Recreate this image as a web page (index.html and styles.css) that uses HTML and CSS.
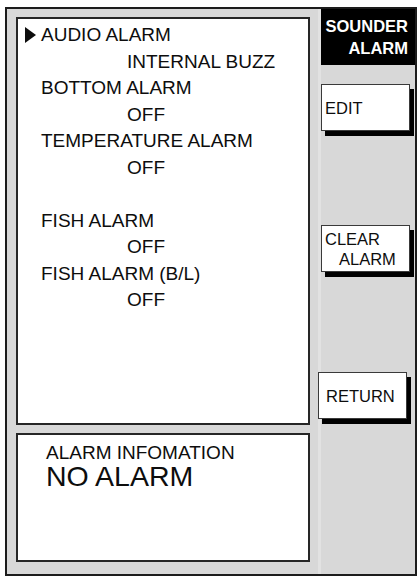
FILE: index.html
```html
<!DOCTYPE html>
<html lang="en">
<head>
    <meta charset="UTF-8">
    <meta name="viewport" content="width=device-width, initial-scale=1.0">
    <title>Sounder Alarm</title>
    <link rel="stylesheet" href="styles.css">
</head>
<body>
    <div class="screen">
        <div class="panels">
            <!-- Alarm settings list -->
            <div class="menu">
                <div class="label selected">AUDIO ALARM</div>
                <div class="value">INTERNAL BUZZ</div>
                <div class="label">BOTTOM ALARM</div>
                <div class="value">OFF</div>
                <div class="label">TEMPERATURE ALARM</div>
                <div class="value">OFF</div>
                <div class="spacer"></div>
                <div class="label">FISH ALARM</div>
                <div class="value">OFF</div>
                <div class="label">FISH ALARM (B/L)</div>
                <div class="value">OFF</div>
            </div>

            <!-- Alarm status -->
            <div class="info">
                <div class="info-title">ALARM INFOMATION</div>
                <div class="info-status">NO ALARM</div>
            </div>
        </div>

        <div class="softkeys">
            <div class="softkey-title">SOUNDER<br>ALARM</div>
            <button class="softkey edit">EDIT</button>
            <button class="softkey clear">CLEAR<br><span class="indent">ALARM</span></button>
            <button class="softkey return">RETURN</button>
        </div>
    </div>
</body>
</html>
```

FILE: styles.css
```css
* {
    box-sizing: border-box;
    margin: 0;
    padding: 0;
}

body {
    font-family: 'Liberation Sans', Arial, sans-serif;
    background-color: #ffffff;
    color: #0d0d0d;
}

.screen {
    display: flex;
    width: 412px;
    height: 569px;
    margin: 7px 0 0 5px;
    border: 2px solid #1c1c1c;
    background-color: #d8d8d8;
}

.panels {
    display: flex;
    flex-direction: column;
    gap: 8px;
    width: 303px;
    padding: 8px 0 12px 9px;
}

.menu {
    height: 408px;
    border: 2px solid #262626;
    background-color: #ffffff;
    padding: 3px 0 0 23px;
    font-size: 19px;
    line-height: 26.5px;
}

.value {
    padding-left: 86px;
}

.spacer {
    height: 26.5px;
}

.selected::before {
    content: "";
    display: inline-block;
    width: 0;
    height: 0;
    border-left: 11px solid #0d0d0d;
    border-top: 8px solid transparent;
    border-bottom: 8px solid transparent;
    margin-left: -16px;
    margin-right: 5px;
    vertical-align: -2px;
}

.info {
    flex: 1;
    border: 2px solid #262626;
    background-color: #ffffff;
    padding: 8px 0 0 28px;
}

.info-title {
    font-size: 19px;
    line-height: 19px;
}

.info-status {
    margin-top: 2px;
    font-size: 28.5px;
    line-height: 24px;
}

.softkeys {
    flex: 1;
    display: flex;
    flex-direction: column;
    align-items: flex-start;
    margin-left: 8px;
    border-left: 3px solid #e2e2e2;
}

.softkey-title {
    width: 100%;
    height: 56px;
    background-color: #000000;
    color: #ffffff;
    font-weight: bold;
    font-size: 16.5px;
    line-height: 22px;
    text-align: right;
    padding: 6px 7px 0 0;
}

.softkey {
    width: 89px;
    height: 47px;
    border: 1px solid #3a3a3a;
    background-color: #ffffff;
    box-shadow: 4px 5px 0 #000000;
    font-family: inherit;
    font-size: 16.5px;
    line-height: 20px;
    color: #0d0d0d;
    text-align: left;
    padding-left: 3px;
}

.edit {
    margin-top: 19px;
}

.clear {
    margin-top: 94px;
}

.indent {
    padding-left: 14px;
}

.return {
    margin-top: 100px;
    margin-left: -3px;
    padding-left: 7px;
}
```
